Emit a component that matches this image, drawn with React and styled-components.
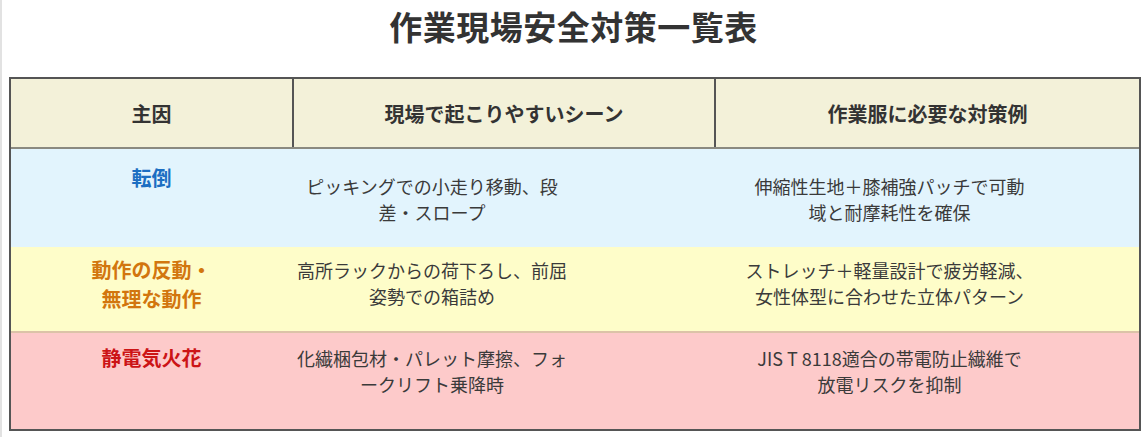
import React from "react";
import styled, { createGlobalStyle } from "styled-components";

const GlobalStyle = createGlobalStyle`
  html, body {
    margin: 0;
    padding: 0;
    background: #ffffff;
  }
  body {
    font-family: "Noto Sans CJK JP", "Noto Sans", sans-serif;
    color: #333333;
  }
`;

const rows = [
  {
    causeLines: ["転倒"],
    color: "#1b6ec2",
    bg: "#e2f4fd",
    height: 98,
    top: 14,
    shift: 10,
    scene: ["ピッキングでの小走り移動、段", "差・スロープ"],
    measure: ["伸縮性生地＋膝補強パッチで可動", "域と耐摩耗性を確保"],
  },
  {
    causeLines: ["動作の反動・", "無理な動作"],
    color: "#d2760e",
    bg: "#fefdc9",
    height: 86,
    top: 8,
    shift: 2,
    line: "#dcc3a8",
    scene: ["高所ラックからの荷下ろし、前屈", "姿勢での箱詰め"],
    measure: ["ストレッチ＋軽量設計で疲労軽減、", "女性体型に合わせた立体パターン"],
  },
  {
    causeLines: ["静電気火花"],
    color: "#cc1416",
    bg: "#fdcaca",
    height: 96,
    top: 10,
    shift: 2,
    scene: ["化繊梱包材・パレット摩擦、フォ", "ークリフト乗降時"],
    measure: ["JIS T 8118適合の帯電防止繊維で", "放電リスクを抑制"],
  },
];

const App = () => {
  return (
    <Page>
      <GlobalStyle />
      <Title>作業現場安全対策一覧表</Title>
      <Table>
        <HeaderRow>
          <HeadCell>主因</HeadCell>
          <HeadCell divider>現場で起こりやすいシーン</HeadCell>
          <HeadCell divider>作業服に必要な対策例</HeadCell>
        </HeaderRow>
        {rows.map((r, i) => (
          <Row key={i} bg={r.bg} h={r.height} line={r.line}>
            <CauseCell color={r.color} top={r.top}>
              {r.causeLines.map((l, j) => (
                <div key={j}>{l}</div>
              ))}
            </CauseCell>
            <TextCell top={r.top + r.shift} right={142}>
              {r.scene.map((l, j) => (
                <div key={j}>{l}</div>
              ))}
            </TextCell>
            <TextCell top={r.top + r.shift} right={74}>
              {r.measure.map((l, j) => (
                <div key={j}>{l}</div>
              ))}
            </TextCell>
          </Row>
        ))}
      </Table>
    </Page>
  );
};

const Page = styled.div`
  width: 1147px;
  height: 437px;
  box-sizing: border-box;
  border-left: 2px solid #e2e2e2;
  padding: 8px 0 0 7px;
  overflow: hidden;
`;

const Title = styled.h1`
  margin: 0 0 33px -9px;
  text-align: center;
  font-size: 33px;
  line-height: 36px;
  font-weight: 700;
  color: #333333;
  letter-spacing: 0.5px;
`;

const Table = styled.div`
  width: 1132px;
  box-sizing: border-box;
  border: 2px solid #555555;
  display: flex;
  flex-direction: column;
`;

const HeaderRow = styled.div`
  display: grid;
  grid-template-columns: 281px 422px 1fr;
  height: 68px;
  background: #f3f1d9;
  border-bottom: 2px solid #8a8a80;
`;

const HeadCell = styled.div`
  display: flex;
  align-items: center;
  justify-content: center;
  font-size: 20px;
  font-weight: 700;
  color: #333333;
  border-left: ${(p) => (p.divider ? "2px solid #555555" : "none")};
`;

const Row = styled.div`
  display: grid;
  grid-template-columns: 281px 422px 1fr;
  height: ${(p) => p.h}px;
  background: ${(p) => p.bg};
  border-bottom: ${(p) => (p.line ? `2px solid ${p.line}` : "none")};
  box-sizing: border-box;
`;

const CauseCell = styled.div`
  padding-top: ${(p) => p.top}px;
  text-align: center;
  font-size: 20px;
  font-weight: 700;
  line-height: 29px;
  color: ${(p) => p.color};
`;

const TextCell = styled.div`
  padding: ${(p) => p.top}px ${(p) => p.right}px 0 0;
  text-align: center;
  font-size: 18px;
  line-height: 26px;
  color: #3a3a3a;
`;

export default App;
